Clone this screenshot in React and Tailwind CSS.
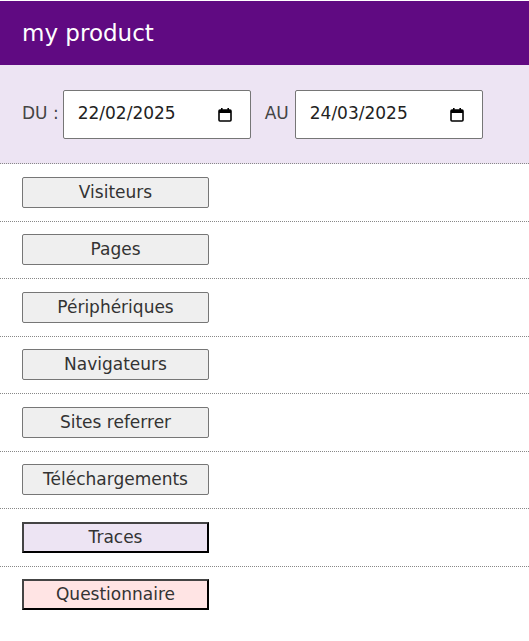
import React from "react";

function Cal() {
  return (
    <svg width="14" height="15" viewBox="0 0 14 15" className="shrink-0">
      <rect x="1" y="3" width="12" height="11" rx="1" fill="none" stroke="#000" strokeWidth="1.6" />
      <rect x="1" y="3" width="12" height="3" fill="#000" />
      <rect x="3" y="1" width="1.6" height="3" fill="#000" />
      <rect x="9.4" y="1" width="1.6" height="3" fill="#000" />
    </svg>
  );
}

function DateBox({ value }) {
  return (
    <div className="flex h-[49px] w-[188px] items-center justify-between rounded-[2px] border border-[#767676] bg-white pl-[14px] pr-[18px] text-[17px] text-[#222]">
      <span>{value}</span>
      <Cal />
    </div>
  );
}

const items = [
  { label: "Visiteurs" },
  { label: "Pages" },
  { label: "Périphériques" },
  { label: "Navigateurs" },
  { label: "Sites referrer" },
  { label: "Téléchargements" },
  { label: "Traces", special: "bg-[#ede4f3]" },
  { label: "Questionnaire", special: "bg-[#ffe4e4]" },
];

export default function App() {
  return (
    <div className="min-h-[641px] bg-white pt-px text-[#333]" style={{ fontFamily: '"DejaVu Sans", sans-serif' }}>
      <div className="flex h-[64px] items-center bg-[#600a82] pl-[22px] text-[23px] text-white">my product</div>
      <div className="flex h-[99px] items-center border-b border-dotted border-[#888] bg-[#ede4f3] pl-[22px] text-[17px] text-[#444]">
        <span className="mr-[4px]">DU :</span>
        <DateBox value="22/02/2025" />
        <span className="ml-[14px] mr-[6px]">AU</span>
        <DateBox value="24/03/2025" />
      </div>
      {items.map((it, i) => (
        <div
          key={it.label}
          className={`flex items-center py-[12.75px] pl-[22px] ${i < items.length - 1 ? "border-b border-dotted border-[#888]" : ""}`}
        >
          {it.special ? (
            <div className={`flex h-[31px] w-[187px] items-center justify-center border-2 border-t-[#444] border-l-[#444] border-r-black border-b-black text-[17px] ${it.special}`}>
              {it.label}
            </div>
          ) : (
            <div className="flex h-[31px] w-[187px] items-center justify-center rounded-[2px] border border-[#767676] bg-[#efefef] text-[17px]">
              {it.label}
            </div>
          )}
        </div>
      ))}
    </div>
  );
}
